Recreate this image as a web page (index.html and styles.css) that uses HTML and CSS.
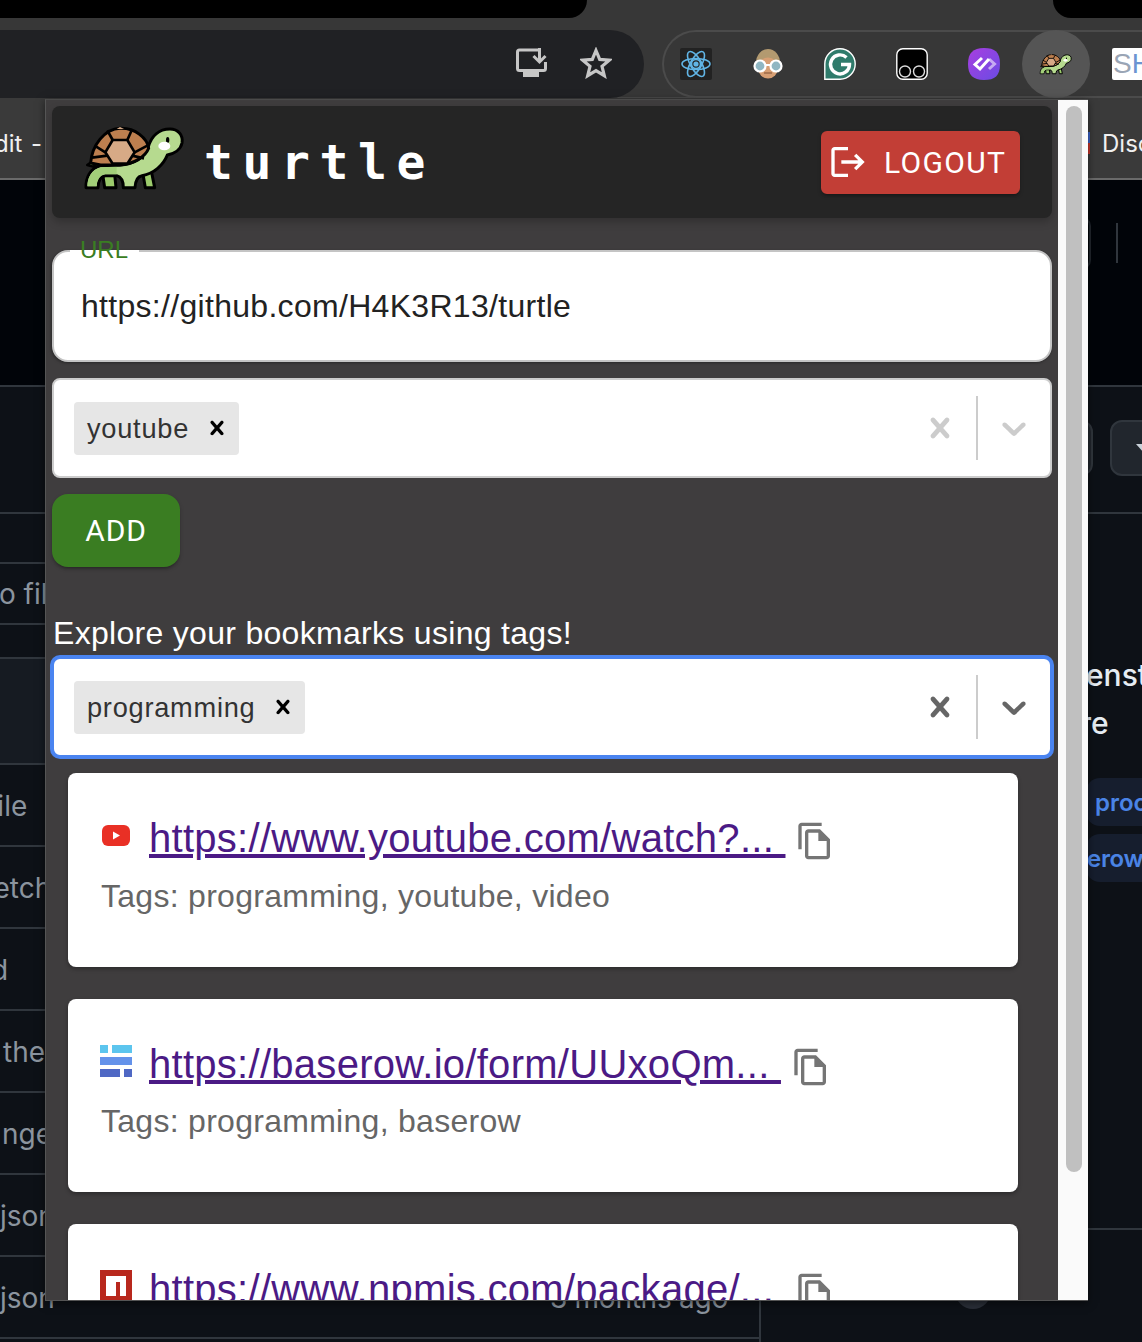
FILE: index.html
```html
<!DOCTYPE html>
<html lang="en">
<head>
<meta charset="utf-8">
<title>turtle</title>
<link rel="stylesheet" href="styles.css">
</head>
<body>
<svg class="defs" width="0" height="0" aria-hidden="true">
  <symbol id="turtle" viewBox="0 0 390 255">
    <path d="M52 150 L72 136 L74 156Z" fill="#8fc45c" stroke="#000" stroke-width="8" stroke-linejoin="round"/>
    <path d="M98 178 H134 L138 218 H104Z" fill="#9ccb6c" stroke="#000" stroke-width="9" stroke-linejoin="round"/>
    <path d="M218 172 L244 168 L254 218 H226Z" fill="#9ccb6c" stroke="#000" stroke-width="9" stroke-linejoin="round"/>
    <path d="M48 218 C47 188 60 160 92 152 L150 150 C190 146 222 130 234 98 C244 62 268 42 300 42 C324 42 340 60 336 84 C332 104 312 116 292 120 C280 150 252 176 216 182 C204 184 196 196 195 218 H160 C160 200 156 186 140 182 H106 C92 184 84 198 84 218Z" fill="#b6da8f" stroke="#000" stroke-width="9" stroke-linejoin="round"/>
    <path d="M52 214 C52 190 64 164 94 157 L140 155 V178 H106 C90 180 80 196 80 214Z" fill="#a2cf79"/>
    <path d="M62 144 C66 90 104 42 150 40 C196 38 232 70 236 100 C226 126 190 148 150 150 L92 150 Z" fill="#bd7f4f" stroke="#000" stroke-width="9" stroke-linejoin="round"/>
    <path d="M128 75 H172 L194 112 L172 146 H128 L106 112Z" fill="#d7aa86" stroke="#000" stroke-width="8" stroke-linejoin="round"/>
    <path d="M128 75 L112 46 M172 75 L184 48 M194 112 L232 92 M106 112 L74 92 M186 122 L222 130 M112 122 L66 128" stroke="#000" stroke-width="8" fill="none"/>
    <path d="M150 36 L140 42 H162Z" fill="#d7aa86"/>
    <ellipse cx="293" cy="75" rx="5" ry="9" fill="#000"/>
    <ellipse cx="283" cy="93" rx="18" ry="13" fill="#fff"/>
  </symbol>
</svg>
<div class="page">
  <div class="tabstrip">
    <div class="tab tab-left"></div>
    <div class="tab tab-right"></div>
  </div>

  <div class="toolbar">
    <div class="omnibox">
      <svg class="omni-icon" viewBox="0 0 34 32"><path d="M26 3H5.500Q3.500 3 3.500 5V21.500Q3.500 23.500 5.500 23.500H29.500Q31.500 23.500 31.500 21.500V15" fill="none" stroke="#c6c6c6" stroke-width="3"/><path d="M9 27.500H25" stroke="#c6c6c6" stroke-width="5"/><path d="M25.500 1V14M19.500 9L25.500 15L31.500 9" fill="none" stroke="#c6c6c6" stroke-width="3"/></svg>
      <svg class="omni-icon" viewBox="0 0 32 32"><path d="M16 3.500L19.700 12.400L29.300 13.100L22 19.300L24.300 28.700L16 23.600L7.700 28.700L10 19.300L2.700 13.100L12.300 12.400Z" fill="none" stroke="#c6c6c6" stroke-width="3.200" stroke-linejoin="miter"/></svg>
    </div>
    <div class="extensions">
      <div class="ext">
        <svg viewBox="0 0 32 32"><rect width="32" height="32" rx="2" fill="#222"/><g fill="none" stroke="#61b5e6" stroke-width="1.600"><ellipse cx="16" cy="16" rx="14" ry="5.500"/><ellipse cx="16" cy="16" rx="14" ry="5.500" transform="rotate(60 16 16)"/><ellipse cx="16" cy="16" rx="14" ry="5.500" transform="rotate(120 16 16)"/><circle cx="16" cy="16" r="4.500"/></g><circle cx="16" cy="16" r="2.600" fill="#61b5e6"/></svg>
      </div>
      <div class="ext">
        <svg viewBox="0 0 32 32"><ellipse cx="16" cy="15" rx="12" ry="14" fill="#b39a70"/><ellipse cx="16" cy="20" rx="10" ry="10.500" fill="#d79f74"/><path d="M12 25H20" stroke="#9c6a48" stroke-width="1.500"/><circle cx="8" cy="18" r="5.500" fill="#8fb6c2" stroke="#fff" stroke-width="2.200"/><circle cx="24" cy="18" r="5.500" fill="#8fb6c2" stroke="#fff" stroke-width="2.200"/><path d="M13 17H19" stroke="#fff" stroke-width="2"/></svg>
      </div>
      <div class="ext">
        <svg viewBox="0 0 32 32"><path d="M16 .8A15.200 15.200 0 1 1 16 31.200H.8V16A15.200 15.200 0 0 1 16 .8Z" fill="#2f7b6b" stroke="#fff" stroke-width="1.400"/><path d="M22.500 9.500A9.500 9.500 0 1 0 25.500 16.500H17" fill="none" stroke="#fff" stroke-width="3.400"/></svg>
      </div>
      <div class="ext">
        <svg viewBox="0 0 32 32"><rect x=".8" y=".8" width="30.400" height="30.400" rx="6" fill="#000" stroke="#fff" stroke-width="1.400"/><circle cx="9" cy="23.500" r="5.500" fill="none" stroke="#ddd" stroke-width="1.400"/><circle cx="23" cy="23.500" r="5.500" fill="none" stroke="#ddd" stroke-width="1.400"/></svg>
      </div>
      <div class="ext">
        <svg viewBox="0 0 32 32"><defs><linearGradient id="purple" x1="0" y1="0" x2="1" y2="1"><stop offset="0" stop-color="#a83ee0"/><stop offset="1" stop-color="#6a4ce4"/></linearGradient></defs><path d="M16 0C27 0 32 4 32 16S27 32 16 32S0 27 0 16S5 0 16 0Z" fill="url(#purple)"/><path d="M14 10L7 16.500L12 21L21 11" fill="none" stroke="#fff" stroke-width="3"/><path d="M21 11L26.500 16L21 21" fill="none" stroke="#fff" stroke-opacity=".55" stroke-width="3"/></svg>
      </div>
      <div class="ext ext-active">
        <svg class="ext-turtle" viewBox="0 0 390 255"><use href="#turtle" width="390" height="255"/></svg>
      </div>
      <div class="ext ext-text"><span class="sh-s">S</span><span class="sh-h">H</span></div>
    </div>
  </div>

  <div class="bookmarks">
    <span class="bm-left">dit -</span>
    <span class="bm-right"><i class="bm-fav"></i>Disc</span>
  </div>

  <div class="repo">
    <div class="files">
      <div class="hero"></div>
      <div class="row row-127"></div>
      <div class="row row-50"></div>
      <div class="row row-61"><span class="name shift-to">to file</span></div>
      <div class="row row-34"></div>
      <div class="row row-106 row-head"></div>
      <div class="row"><span class="name shift-file">file</span></div>
      <div class="row"><span class="name shift-fetch">fetch</span></div>
      <div class="row"><span class="name shift-d">d</span></div>
      <div class="row"><span class="name shift-the">the</span></div>
      <div class="row"><span class="name shift-nge">nge</span></div>
      <div class="row"><span class="name shift-json">json</span></div>
      <div class="row"><span class="name shift-json">json</span><span class="age">3 months ago</span></div>
    </div>
    <div class="side">
      <div class="side-hero">
        <div class="side-tools"><span class="side-box"></span><span class="side-rule"></span></div>
      </div>
      <div class="side-actions"><span class="act act-a"></span><span class="act act-b"><i class="caret"></i></span></div>
      <div class="about">
        <p class="about-line">enst</p>
        <p class="about-line about-shift">re</p>
        <div class="topic"><span class="topic-text topic-first">proc</span></div>
        <div class="topic"><span class="topic-text topic-second">erow</span></div>
      </div>
      <div class="side-foot"><span class="dot"></span></div>
    </div>
  </div>

  <div class="popup">
    <div class="content">
      <header class="appbar">
        <svg class="logo" viewBox="0 0 390 255"><use href="#turtle" width="390" height="255"/></svg>
        <div class="brand">turtle</div>
        <button class="btn btn-logout" type="button">
          <svg class="btn-icon" viewBox="0 0 24 24"><path d="M17 7l-1.410 1.410L18.170 11H8v2h10.170l-2.580 2.580L17 17l5-5zM4 5h8V3H4c-1.100 0-2 .9-2 2v14c0 1.100.9 2 2 2h8v-2H4V5z" fill="#fff"/></svg>
          LOGOUT
        </button>
      </header>

      <div class="field">
        <span class="notch"></span>
        <label class="field-label">URL</label>
        <div class="field-value">https://github.com/H4K3R13/turtle</div>
      </div>

      <div class="select">
        <div class="values">
          <span class="chip"><span class="chip-label">youtube</span><svg class="chip-x" viewBox="0 0 20 20"><use href="#crosspath"/></svg></span>
        </div>
        <div class="indicators">
          <svg class="ind ind-muted" viewBox="0 0 20 20"><path id="crosspath" d="M14.348 14.849c-.469.469-1.229.469-1.697 0l-2.651-3.030-2.651 3.029c-.469.469-1.229.469-1.697 0-.469-.469-.469-1.229 0-1.697l2.758-3.150-2.759-3.152c-.469-.469-.469-1.228 0-1.697s1.228-.469 1.697 0l2.652 3.031 2.651-3.031c.469-.469 1.228-.469 1.697 0s.469 1.229 0 1.697l-2.758 3.152 2.758 3.150c.469.469.469 1.229 0 1.698z"/></svg>
          <span class="sep"></span>
          <svg class="ind ind-muted" viewBox="0 0 20 20"><path d="M4.516 7.548c.436-.446 1.043-.481 1.576 0l3.908 3.747 3.908-3.747c.533-.481 1.141-.446 1.576 0 .436.445.408 1.197 0 1.615-.406.418-4.695 4.502-4.695 4.502-.217.223-.502.335-.789.335s-.572-.112-.79-.335c0 0-4.287-4.084-4.695-4.502s-.436-1.170 0-1.615z"/></svg>
        </div>
      </div>

      <button class="btn btn-add" type="button">ADD</button>

      <div class="explore">Explore your bookmarks using tags!</div>

      <div class="select select-focus">
        <div class="values">
          <span class="chip"><span class="chip-label">programming</span><svg class="chip-x" viewBox="0 0 20 20"><use href="#crosspath"/></svg></span>
        </div>
        <div class="indicators">
          <svg class="ind ind-strong" viewBox="0 0 20 20"><use href="#crosspath"/></svg>
          <span class="sep"></span>
          <svg class="ind ind-strong" viewBox="0 0 20 20"><path d="M4.516 7.548c.436-.446 1.043-.481 1.576 0l3.908 3.747 3.908-3.747c.533-.481 1.141-.446 1.576 0 .436.445.408 1.197 0 1.615-.406.418-4.695 4.502-4.695 4.502-.217.223-.502.335-.789.335s-.572-.112-.79-.335c0 0-4.287-4.084-4.695-4.502s-.436-1.170 0-1.615z"/></svg>
        </div>
      </div>

      <div class="cards">
        <article class="card">
          <div class="link-row">
            <svg class="favicon" viewBox="0 0 32 32"><rect x="2" y="6" width="28" height="21" rx="6" fill="#e93025"/><path d="M13 12.500L20 16.500L13 20.500Z" fill="#fff"/></svg>
            <a class="link" href="#">https://www.youtube.com/watch?... </a>
            <svg class="copy" viewBox="0 0 24 24"><path d="M16 1H4c-1.100 0-2 .9-2 2v14h2V3h12V1zm-1 4H8c-1.100 0-1.990.9-1.990 2L6 21c0 1.100.89 2 1.990 2H19c1.100 0 2-.9 2-2V11l-6-6zM8 21V7h6v5h5v9H8z"/></svg>
          </div>
          <p class="tags">Tags: programming, youtube, video</p>
        </article>
        <article class="card">
          <div class="link-row">
            <svg class="favicon" viewBox="0 0 32 32"><path d="M0 0H8V8H0ZM12 0H32V8H12Z" fill="#5cc5ee"/><rect y="12" width="32" height="8" fill="#6492ea"/><path d="M0 24H20V32H0ZM24 24H32V32H24Z" fill="#4f68c4"/></svg>
            <a class="link" href="#">https://baserow.io/form/UUxoQm... </a>
            <svg class="copy" viewBox="0 0 24 24"><path d="M16 1H4c-1.100 0-2 .9-2 2v14h2V3h12V1zm-1 4H8c-1.100 0-1.990.9-1.990 2L6 21c0 1.100.89 2 1.990 2H19c1.100 0 2-.9 2-2V11l-6-6zM8 21V7h6v5h5v9H8z"/></svg>
          </div>
          <p class="tags">Tags: programming, baserow</p>
        </article>
        <article class="card">
          <div class="link-row">
            <svg class="favicon" viewBox="0 0 32 32"><rect width="32" height="32" fill="#b8281d"/><path d="M6 6H26V26H20V12H16V26H6Z" fill="#fff"/></svg>
            <a class="link" href="#">https://www.npmjs.com/package/... </a>
            <svg class="copy" viewBox="0 0 24 24"><path d="M16 1H4c-1.100 0-2 .9-2 2v14h2V3h12V1zm-1 4H8c-1.100 0-1.990.9-1.990 2L6 21c0 1.100.89 2 1.990 2H19c1.100 0 2-.9 2-2V11l-6-6zM8 21V7h6v5h5v9H8z"/></svg>
          </div>
        </article>
      </div>
    </div>
    <div class="scrollbar"><div class="thumb"></div></div>
  </div>
</div>
</body>
</html>
```

FILE: styles.css
```css
* { box-sizing: border-box; }
html, body { margin: 0; padding: 0; background: #0d1117; }
.defs { position: absolute; }
.page {
  position: relative;
  width: 1142px;
  height: 1342px;
  overflow: hidden;
  display: flex;
  flex-direction: column;
  font-family: "Liberation Sans", Arial, sans-serif;
  background: #0d1117;
}

/* browser chrome */
.tabstrip { height: 18px; flex: none; display: flex; justify-content: space-between; background: #373737; }
.tab { background: #000; height: 18px; }
.tab-left { width: 587px; border-bottom-right-radius: 18px; }
.tab-right { width: 89px; border-bottom-left-radius: 18px; }

.toolbar { height: 80px; flex: none; display: flex; padding-top: 12px; background: #373737; border-bottom: 1px solid #4a4a4a; }
.omnibox {
  width: 644px; height: 68px; flex: none;
  display: flex; align-items: center; justify-content: flex-end; gap: 32px;
  padding-right: 32px;
  background: #202124;
  border-radius: 0 34px 34px 0;
}
.omni-icon { width: 34px; height: 32px; display: block; margin-bottom: 2px; }
.omni-icon + .omni-icon { width: 32px; }
.extensions {
  margin-left: 18px; flex: 1; height: 68px;
  display: flex; align-items: center; gap: 40px;
  padding-left: 16px;
  border: 2px solid #4b4b4b; border-right: 0;
  border-radius: 34px 0 0 34px;
}
.ext { position: relative; width: 32px; height: 32px; flex: none; display: flex; align-items: center; justify-content: center; }
.ext svg { width: 32px; height: 32px; display: block; position: relative; flex: none; }
.ext-active::before {
  content: ""; position: absolute; left: -18px; top: -18px;
  width: 68px; height: 68px; border-radius: 50%; background: #555;
}
.ext .ext-turtle { width: 42px; height: 28px; }
.ext-text {
  justify-content: flex-start; background: #fff; border-radius: 2px; width: 32px;
  font-size: 28px; line-height: 32px; padding-left: 1px; overflow: hidden;
}
.sh-s { color: #9aa5b5; }
.sh-h { color: #6b95d2; }

.bookmarks {
  height: 82px; flex: none;
  display: flex; justify-content: space-between; align-items: center;
  padding-top: 10px;
  background: #3a3a3a; border-bottom: 2px solid #6a6a6a;
  color: #f0f0f0; font-size: 24px; font-family: Inter, "Liberation Sans", sans-serif;
}
.bm-left { margin-left: -6px; word-spacing: 2px; }
.bm-right { width: 54px; display: flex; align-items: center; white-space: nowrap; }
.bm-fav { width: 2px; height: 22px; margin-right: 12px; flex: none; background: linear-gradient(#3a62c8 50%, #c8352a 50%); }

/* repository page behind the popup */
.repo { flex: 1; display: flex; min-height: 0; color: #8b949e; font-size: 28px; font-family: Inter, "Liberation Sans", sans-serif; }
.files { width: 761px; flex: none; border-right: 2px solid #30363d; }
.hero { height: 207px; background: #010409; border-bottom: 2px solid #30363d; }
.row { height: 82px; display: flex; align-items: center; padding-top: 1px; border-bottom: 2px solid #30363d; white-space: nowrap; }
.row-127 { height: 127px; }
.row-50 { height: 50px; }
.row-61 { height: 61px; }
.row-34 { height: 34px; }
.row-106 { height: 106px; }
.row-head { background: #161b22; }
.shift-to { margin-left: -10px; }
.shift-file { margin-left: -13px; }
.shift-fetch { margin-left: -16px; }
.shift-d { margin-left: -9px; }
.shift-the { margin-left: 3px; }
.shift-nge { margin-left: 2px; }
.shift-json { margin-left: 0; }
.age { margin-left: 495px; letter-spacing: -.25px; }

.side { flex: 1; min-width: 0; overflow: hidden; }
.side-hero { height: 207px; background: #010409; border-bottom: 2px solid #30363d; padding-top: 36px; }
.side-tools { display: flex; align-items: center; }
.side-box { width: 60px; height: 54px; margin-left: 270px; border: 2px solid #21262d; border-radius: 10px; }
.side-rule { width: 2px; height: 40px; margin-left: 25px; background: #30363d; }
.side-actions { height: 127px; border-bottom: 2px solid #30363d; display: flex; align-items: flex-start; padding: 33px 0 0 270px; gap: 17px; }
.act { width: 62px; height: 56px; flex: none; background: #21262d; border: 2px solid #30363d; border-radius: 12px; position: relative; }
.act-b { width: 60px; }
.caret { position: absolute; left: 24px; top: 22px; width: 0; height: 0; border: 7px solid transparent; border-top: 8px solid #c9d1d9; }
.about { height: 716px; border-bottom: 2px solid #30363d; padding: 137px 0 0 325px; color: #e6edf3; font-size: 30px; }
.about-line { margin: 0; height: 48px; line-height: 48px; font-weight: 500; white-space: nowrap; }
.about-shift { margin-left: -6px; }
.topic { width: 120px; height: 48px; margin: 8px 0 0 0; background: #161e2e; border-radius: 14px 0 0 14px; color: #4a84e6; font-size: 24px; line-height: 50px; font-weight: 600; }
.about-line + .topic { margin-top: 31px; }
.topic-first { margin-left: 9px; }
.topic-second { margin-left: 1px; letter-spacing: -.3px; }
.topic-text { display: inline-block; }
.side-foot { padding: 43px 0 0 194px; }
.dot { display: block; width: 36px; height: 36px; border-radius: 50%; background: #2a2f38; }

/* extension popup */
.popup {
  position: absolute; left: 45px; top: 99px;
  width: 1043px; height: 1202px;
  display: flex; overflow: hidden;
  background: #3f3d3e;
  border-top: 1px solid #4a4a4a;
  border-left: 1px solid #555;
  border-bottom: 1px solid #555;
  box-shadow: 0 2px 8px rgba(0,0,0,.5);
}
.content { flex: 1; min-width: 0; padding: 6px 6px 0; display: flex; flex-direction: column; align-items: flex-start; }
.scrollbar { width: 30px; flex: none; background: #fafafa; padding: 6px 6px 0 8px; }
.thumb { height: 1066px; border-radius: 8px; background: #c0c0c0; }

.appbar {
  width: 1000px; height: 112px; flex: none;
  display: flex; align-items: center;
  padding: 0 32px 0 18px;
  background: #252525; border-radius: 8px;
  box-shadow: 0 4px 8px rgba(0,0,0,.22);
}
.logo { width: 130px; height: 85px; flex: none; margin-bottom: 9px; }
.brand {
  margin-left: 4px;
  color: #fff;
  font: 700 48px/56px "DejaVu Sans Mono", monospace;
  letter-spacing: 9.6px;
}
.btn {
  border: 0; color: #fff; cursor: pointer;
  font-family: Roboto, sans-serif; font-size: 30px; font-weight: 400; letter-spacing: .86px;
  box-shadow: 0 3px 3px -2px rgba(0,0,0,.25), 0 2px 4px rgba(0,0,0,.2);
}
.btn-logout {
  margin-left: auto; width: 199px; height: 63px;
  display: flex; align-items: center; padding: 0 0 0 7px;
  background: #c23e36; border-radius: 6px;
  letter-spacing: 1.35px;
}
.btn-icon { width: 40px; height: 40px; margin-right: 16px; flex: none; }

.field {
  position: relative; width: 1000px; height: 112px; flex: none; margin-top: 32px;
  display: flex; align-items: center;
  padding-left: 27px;
  background: #fff; border: 2px solid #c4c4c4; border-radius: 16px;
  box-shadow: -1px 1px 3px rgba(0,0,0,.35);
}
.notch { position: absolute; left: 16px; top: -2px; width: 69px; height: 2px; background: #fff; }
.field-label { position: absolute; left: 26px; top: -16px; color: #3a7d22; font-size: 24px; line-height: 28px; }
.field-value { color: #222; font-size: 32px; line-height: 37px; letter-spacing: .3px; }

.select {
  width: 1000px; height: 100px; flex: none; margin-top: 16px;
  display: flex; align-items: center;
  background: #fff; border: 2px solid #ccc; border-radius: 8px;
}
.select-focus { margin-top: 5px; border-color: #4a84f0; box-shadow: 0 0 0 2px #4a84f0; }
.values { flex: 1; padding-left: 20px; display: flex; }
.chip { height: 53px; display: flex; align-items: center; background: #e6e6e6; border-radius: 4px; }
.chip-label { padding: 2px 6px 0 13px; color: #333; font-size: 27.2px; letter-spacing: .75px; }
.chip-x { width: 28px; height: 28px; margin: 0 8px; fill: #000; }
.indicators { display: flex; align-items: center; flex: none; }
.ind { width: 40px; height: 40px; margin: 0 16px; display: block; }
.ind-muted { fill: #ccc; }
.ind-strong { fill: #666; }
.sep { width: 2px; height: 64px; background: #ccc; }

.btn-add {
  width: 128px; height: 73px; flex: none; margin-top: 16px; padding: 0;
  background: #3a7d22; border-radius: 16px;
}
.explore { margin: 48px 0 0 1px; color: #fff; font-size: 32px; line-height: 37px; white-space: nowrap; letter-spacing: .3px; }

.cards { margin: 16px 0 0 16px; display: flex; flex-direction: column; gap: 32px; }
.card {
  width: 950px; height: 193.5px; flex: none; padding: 32px 32px 0;
  background: #fff; border-radius: 8px;
  box-shadow: 0 2px 4px rgba(0,0,0,.3);
}
.link-row { height: 69.5px; display: flex; align-items: flex-start; }
.favicon { width: 32px; height: 32px; flex: none; margin: 14px 17px 0 0; }
.link { margin-top: 10px; color: #4b1a85; font-size: 40px; line-height: 46px; white-space: pre; text-decoration: underline; letter-spacing: .28px; }
.copy { width: 40px; height: 40px; flex: none; margin: 16px 0 0 10px; fill: #757575; }
.tags { margin: 0 0 0 1px; color: #666; font-size: 32px; line-height: 42px; letter-spacing: .28px; }
```
